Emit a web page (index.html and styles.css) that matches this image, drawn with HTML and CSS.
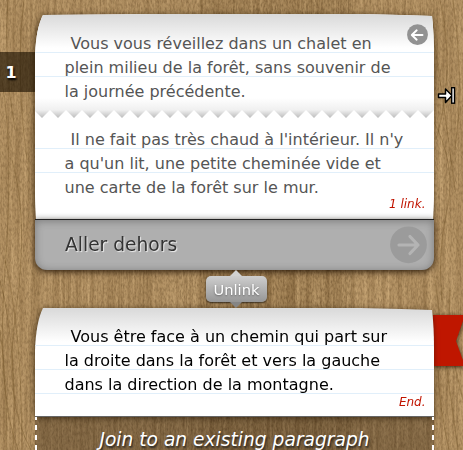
FILE: index.html
```
<!DOCTYPE html>
<html lang="fr">
<head>
<meta charset="utf-8">
<title>Story</title>
<link rel="stylesheet" href="styles.css">
</head>
<body>
<svg class="wood" width="463" height="450" aria-hidden="true">
  <defs>
    <filter id="grain" x="0" y="0" width="100%" height="100%" color-interpolation-filters="sRGB">
      <feTurbulence type="fractalNoise" baseFrequency="0.3 0.009" numOctaves="3" seed="8"/>
      <feColorMatrix values="0.27 0 0 0 0.54  0.26 0 0 0 0.42  0.23 0 0 0 0.26  0 0 0 0 1"/>
    </filter>
    <filter id="fine" x="0" y="0" width="100%" height="100%" color-interpolation-filters="sRGB">
      <feTurbulence type="fractalNoise" baseFrequency="0.6 0.25" numOctaves="2" seed="3"/>
      <feColorMatrix values="0 0 0 0 0.25  0 0 0 0 0.16  0 0 0 0 0.05  1.2 0 0 0 -0.45"/>
    </filter>
    <linearGradient id="planks" gradientUnits="userSpaceOnUse" x1="0" x2="463" y1="0" y2="0">
      <stop offset="0" stop-color="#caa470" stop-opacity=".2"/>
      <stop offset=".43" stop-color="#caa470" stop-opacity=".08"/>
      <stop offset=".432" stop-color="#5c3d14" stop-opacity=".1"/>
      <stop offset=".76" stop-color="#5c3d14" stop-opacity=".08"/>
      <stop offset=".762" stop-color="#caa470" stop-opacity=".15"/>
      <stop offset="1" stop-color="#caa470" stop-opacity=".2"/>
    </linearGradient>
  </defs>
  <rect width="463" height="450" fill="#a98b5e"/>
  <rect width="463" height="450" filter="url(#grain)"/>
  <rect width="463" height="450" filter="url(#fine)" opacity=".6"/>
  <rect width="463" height="450" fill="url(#planks)"/>
  <g fill="none" stroke="#6b4c22" stroke-opacity=".35">
    <path d="M2 80Q14 150 5 270T18 450M12 160Q29 220 16 310T31 450M0 280Q18 350 13 450M24 0Q15 70 27 160M8 0Q3 60 15 130M0 330Q8 390 6 450M5 260Q22 330 22 450"/>
    <path d="M433 120Q457 165 447 210T442 300M440 0Q456 70 436 140M453 0Q465 80 455 150M435 280Q444 350 458 450M438 370Q439 405 449 450M450 290Q446 340 463 400M434 40Q442 90 455 190"/>
  </g>
</svg>

<main class="story">
  <article class="card">
    <div class="number">1</div>
    <div class="sheet">
      <div class="paper faded">
        <section class="part first">
          <p>Vous vous réveillez dans un chalet en<br>plein milieu de la forêt, sans souvenir de<br>la journée précédente.</p>
          <svg class="tear" width="399" height="8" aria-hidden="true">
            <defs><pattern id="teeth" x="-1" width="16" height="8" patternUnits="userSpaceOnUse"><path d="M8 8L16 0L24 8ZM-8 8L0 0L8 8Z" fill="#fff"/></pattern></defs>
            <rect width="399" height="8" fill="url(#teeth)"/>
          </svg>
        </section>
        <section class="part second">
          <p>Il ne fait pas très chaud à l'intérieur. Il n'y<br>a qu'un lit, une petite cheminée vide et<br>une carte de la forêt sur le mur.</p>
        </section>
        <div class="status">1 link.</div>
      </div>
    </div>
    <svg class="back" width="22" height="22" viewBox="0 0 22 22" aria-hidden="true">
      <circle cx="11.5" cy="10.7" r="10.4" fill="#929292"/>
      <path d="M16.5 11H6M10.7 6.3L5.8 11L10.7 15.7" fill="none" stroke="#fff" stroke-width="1.9" stroke-linecap="round" stroke-linejoin="round"/>
    </svg>
    <div class="choice">
      <span>Aller dehors</span>
      <svg width="38" height="38" viewBox="0 0 38 38" aria-hidden="true">
        <circle cx="19.5" cy="18.8" r="18.4" fill="#9b9b9b"/>
        <path d="M10 19H29M21 10.5L29 19L21 27.5" fill="none" stroke="#b4b4b4" stroke-width="3.2" stroke-linecap="round" stroke-linejoin="round"/>
      </svg>
    </div>
  </article>

  <div class="unlink">Unlink</div>

  <article class="card ending">
    <div class="ribbon"><div class="ribbon-shape"></div></div>
    <div class="sheet">
      <div class="paper">
        <section class="part last">
          <p>Vous être face à un chemin qui part sur<br>la droite dans la forêt et vers la gauche<br>dans la direction de la montagne.</p>
        </section>
        <div class="status">End.</div>
      </div>
    </div>
    <div class="join">Join to an existing paragraph
      <svg class="dash" aria-hidden="true" width="399" height="40"><path d="M1 -2V40M398 -2V40" stroke="#fff" stroke-width="2" stroke-dasharray="5 5"/></svg>
    </div>
  </article>
</main>

<svg class="cursor" width="20" height="20" viewBox="0 0 20 20" aria-hidden="true">
  <path d="M1.5 8H8.5V3L15 9.5L8.5 16.5V11.5H1.5Z" fill="#fff" stroke="#000" stroke-width="1.5" stroke-linejoin="round"/>
  <rect x="14.7" y="1.7" width="2.8" height="15.5" fill="#fff" stroke="#000" stroke-width="1.4"/>
</svg>
</body>
</html>
```
FILE: styles.css
```
* { box-sizing: border-box; }

body {
  margin: 0;
  height: 450px;
  position: relative;
  overflow: hidden;
  background: #a98b5e;
  font-family: "DejaVu Sans", sans-serif;
  font-size: 16px;
  line-height: 24px;
}

svg { display: block; }

.wood { position: absolute; left: 0; top: 0; }

.story {
  position: relative;
  width: 399px;
  margin-left: 35px;
  padding-top: 14px;
}

.card { position: relative; }

.sheet {
  position: relative;
  filter: drop-shadow(-1px 1px 3px rgba(35, 20, 0, .7));
}

.paper {
  position: relative;
  height: 205px;
  background: #fff;
  color: #000;
  clip-path: path("M8 1Q180 -1 325 0Q370 1 397 2Q399 18 399 45V180L398 205H1L0 180V42Q1 14 8 1Z");
}

.faded { color: #555; }

.part p { margin: 0; padding-left: 29.5px; text-indent: 6px; white-space: nowrap; }

.first {
  position: relative;
  height: 104px;
  padding-top: 18px;
  background:
    linear-gradient(#e1effa, #e1effa) 0 38px / 100% 1px no-repeat,
    linear-gradient(#e1effa, #e1effa) 0 62px / 100% 1px no-repeat,
    linear-gradient(#d9d9d9, #fff 34px, #fff 84px, #f0f0f0 96px, #bcbcbc);
}

.tear { position: absolute; left: 0; bottom: 0; }

.second {
  padding-top: 10px;
  height: 101px;
  background:
    linear-gradient(#e1effa, #e1effa) 0 30px / 100% 1px no-repeat,
    linear-gradient(#e1effa, #e1effa) 0 54px / 100% 1px no-repeat,
    linear-gradient(#fff 94px, #f1f3f3);
}

.status {
  position: absolute;
  right: 8.5px;
  bottom: 7px;
  font-size: 12px;
  line-height: 16px;
  font-style: italic;
  color: #c01400;
}

.number {
  position: absolute;
  left: -35px;
  top: 38px;
  width: 35px;
  height: 40px;
  padding-right: 13px;
  background: rgba(30, 18, 3, .64);
  color: #fff;
  font-weight: bold;
  line-height: 41px;
  text-align: center;
  text-shadow: 1px 2px 2px #000;
}

.back { position: absolute; right: 6px; top: 10px; }

.choice {
  position: relative;
  display: flex;
  align-items: center;
  justify-content: space-between;
  height: 51px;
  padding: 0 7px 0 30px;
  border-top: 1px solid #222;
  border-radius: 0 0 12px 12px;
  background: #afafaf;
  box-shadow: inset 0 1px 9px rgba(0, 0, 0, .3), 0 2px 6px rgba(30, 15, 0, .85);
  color: #333;
  font-size: 18.67px;
  text-shadow: 1px 1px 1px #eee;
}

.unlink {
  position: relative;
  z-index: 2;
  width: 61px;
  height: 26px;
  margin: 6px auto 0;
  left: 2px;
  border-radius: 5px;
  background: linear-gradient(#cecece, #969696);
  box-shadow: 0 1px 2px rgba(0, 0, 0, .65);
  color: #fff;
  font-size: 14.67px;
  line-height: 27px;
  text-align: center;
  text-shadow: 0 1px 2px #666;
}

.unlink::before, .unlink::after {
  content: "";
  position: absolute;
  left: 24px;
  border: 6px solid transparent;
}

.unlink::before { top: -6px; border-top: 0; border-bottom-color: #d2d2d2; }
.unlink::after { bottom: -6px; border-bottom: 0; border-top-color: #858585; }

.ending { margin-top: 6px; }

.ending .paper {
  height: 109px;
  border-bottom: 1px solid #666;
  clip-path: path("M8 0Q180 -1 325 0Q370 1 397 2Q399 18 399 40V109H0V42Q1 14 8 0Z");
}

.ending .status { bottom: 6px; }

.last {
  padding-top: 17px;
  height: 108px;
  background:
    linear-gradient(#e1effa, #e1effa) 0 37px / 100% 1px no-repeat,
    linear-gradient(#e1effa, #e1effa) 0 61px / 100% 1px no-repeat,
    linear-gradient(#e1effa, #e1effa) 0 85px / 100% 1px no-repeat,
    linear-gradient(#d9d9d9, #fff 34px);
}

.ribbon {
  position: absolute;
  left: 398px;
  top: 7px;
  filter: drop-shadow(0 1px 2px rgba(30, 15, 0, .8));
}

.ribbon-shape {
  width: 32px;
  height: 51px;
  background: #bf1600;
  clip-path: polygon(0 0, 32px 0, 23px 26px, 32px 51px, 0 51px);
}

.join {
  position: relative;
  height: 50px;
  padding-top: 11px;
  background: rgba(35, 24, 9, .3);
  color: #fff;
  font-size: 18.67px;
  font-style: italic;
  text-align: center;
  text-shadow: 1px 2px 2px #222;
}

.dash { position: absolute; left: 0; top: 0; }

.cursor { position: absolute; left: 437px; top: 86px; }
```
